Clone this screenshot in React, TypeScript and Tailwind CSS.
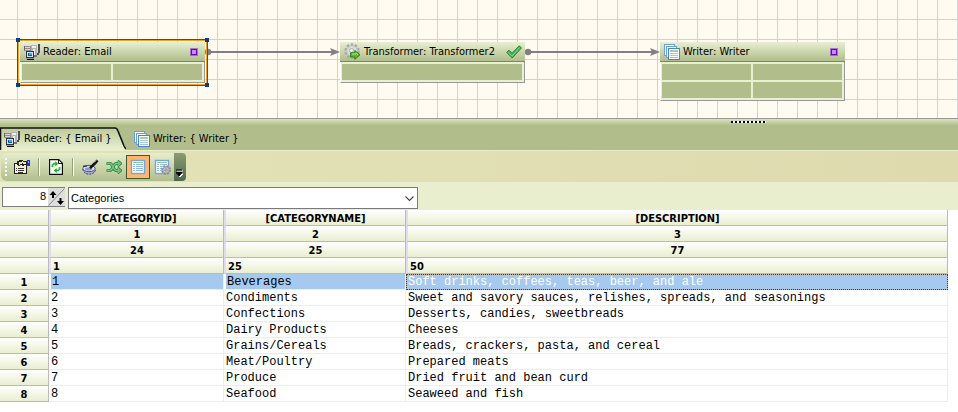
import { useState, type ReactNode } from "react";

const uiFont = "font-['DejaVu_Sans_Condensed','DejaVu_Sans',sans-serif]";

function ReaderIcon() {
  return (
    <svg width="16" height="16" viewBox="0 0 16 16" shapeRendering="crispEdges" aria-hidden="true">
      <path d="M0 2h7v9H5V7H0z" fill="#8f8f8f" />
      <path d="M1 3h5v1H1zM1 5h5v1H1z" fill="#d6d6d6" />
      <path d="M0 2h1v4H0zM2 7h1v2H2z" fill="#666" />
      <path d="M7 1h6v11H7z" fill="#b4b4b4" />
      <path d="M8 2h4v2H8zM9 5h2v6H9z" fill="#efefef" />
      <path d="M14 0h2v9h-1v2h-2V9h1z" fill="#4e4e4e" />
      <path d="M13 2h1v6h-1z" fill="#e0e0e0" />
      <path d="M2 7h8v7H2z" fill="#333" />
      <path d="M3 8h6v5H3z" fill="#d9e2ea" />
      <path d="M4 9h4v3H4z" fill="#0759b8" />
      <path d="M5 9h3v2H5z" fill="#22b6ed" />
      <path d="M2 14h8v1H2z" fill="#999" />
      <path d="M3 15h7v1H3z" fill="#111" />
      <path d="M10 11h3v2h-3z" fill="#777" />
    </svg>
  );
}

function WriterIcon() {
  return (
    <svg width="16" height="16" viewBox="0 0 16 16" aria-hidden="true">
      <rect x="0.5" y="0.5" width="10" height="11" fill="#f3f8fd" stroke="#6f9fdb" />
      <rect x="2.5" y="2.5" width="10" height="11" fill="#f3f8fd" stroke="#6f9fdb" />
      <rect x="4.5" y="4.5" width="11" height="11" fill="#f8fbff" stroke="#4f82c8" />
      <path d="M6 6h8v2H6z" fill="#a9d08c" />
      <path d="M6 9h8v1H6zM6 11h8v1H6zM6 13h8v1H6z" fill="#a5c4ec" />
    </svg>
  );
}

function GearArrowIcon() {
  return (
    <svg width="17" height="17" viewBox="0 0 17 17" aria-hidden="true">
      <circle cx="8" cy="8" r="6.4" fill="none" stroke="#a6a6a6" strokeWidth="2.6" strokeDasharray="2.4 1.62" />
      <circle cx="8" cy="8" r="5.4" fill="#dcdcdc" stroke="#bdbdbd" />
      <circle cx="7.5" cy="7.5" r="2" fill="#f4f7e9" stroke="#a8a8a8" />
      <path d="M6.5 9.8h4.3V7.5l5.2 4.3-5.2 4.5V14H6.5z" fill="#62b52c" stroke="#2c8216" />
      <path d="M8 11h4v-1l2 1.8" fill="none" stroke="#b3e283" />
    </svg>
  );
}

function CheckIcon() {
  return (
    <svg width="16" height="14" viewBox="0 0 16 14" aria-hidden="true">
      <path d="M.7 7.4 3 5.2l3 3.1L13.3.8 15.4 3 6.2 13z" fill="#4caf58" stroke="#23853a" strokeLinejoin="round" />
      <path d="m2 7.2 4 4L13.6 2.5" fill="none" stroke="#8bd690" />
    </svg>
  );
}

function PropertiesIcon() {
  return (
    <svg width="18" height="16" viewBox="0 0 18 16" shapeRendering="crispEdges" aria-hidden="true">
      <path d="M1 4h13v11H1z" fill="#222" />
      <path d="M2 5h11v9H2z" fill="#f2efd4" />
      <path d="M3 9h1v1H3zM5 9h6v1H5zM3 11h1v1H3zM5 11h6v1H5zM5 13h5v1H5z" fill="#333" />
      <path d="M4 4V2h2V1h4v1h4v4h-3v1H9V6H7v1H5z" fill="#222" />
      <path d="M6 3h3V2h1v1h3v2h-3V4H9v1H7v1H6z" fill="#efe3b0" />
      <path d="M14 1h3v6h-3z" fill="#1732e8" />
      <path d="M15 2h1v2h-1z" fill="#8fa5ff" />
    </svg>
  );
}

function RefreshIcon() {
  return (
    <svg width="14" height="16" viewBox="0 0 14 16" aria-hidden="true">
      <path d="M.6.6h9.2l3.6 3.6v11.2H.6z" fill="#fff" stroke="#111" strokeWidth="1.2" />
      <path d="M9.5.8v3.7h3.7" fill="none" stroke="#111" />
      <path d="M3.4 8V6.2l1.5-1.5H7M10.6 8v2l-1.5 1.5H7" fill="none" stroke="#12c41c" strokeWidth="1.7" />
      <path d="m6.3 2.2 3 2.5-3 2.5zM7.7 9v5l-3-2.5z" fill="#12b41c" />
    </svg>
  );
}

function PanIcon() {
  return (
    <svg width="17" height="16" viewBox="0 0 17 16" aria-hidden="true">
      <path d="M1 10c0 7 12.5 7 12.5 0" fill="#a9aed8" stroke="#3a3f78" strokeDasharray="2 1" />
      <ellipse cx="7" cy="9.5" rx="6.2" ry="3.2" fill="#d4d8f2" stroke="#4d5188" />
      <ellipse cx="6.5" cy="10" rx="3.6" ry="1.6" fill="#8d94cc" />
      <path d="M8 9.2 13.2 4l2.3-2.6" fill="none" stroke="#111" strokeWidth="2.6" />
      <path d="m12.7 3.4 1.8-2" stroke="#888" />
      <path d="M1 7.2h4" stroke="#111" />
    </svg>
  );
}

function ShuffleIcon() {
  return (
    <svg width="16" height="14" viewBox="0 0 16 14" aria-hidden="true">
      {["#2c8944", "#79c584"].map((color, i) => (
        <path
          key={color}
          d="M.5 3.5H4c2.5 0 3.500 7 6 7h3M.5 10.500H4c2.500 0 3.500-7 6-7h3M11.500 1l3 2.500-3 2.500M11.500 8l3 2.500-3 2.500"
          fill="none"
          stroke={color}
          strokeWidth={i === 0 ? 3 : 1.3}
        />
      ))}
    </svg>
  );
}

function GridIcon({ gear = false }: { gear?: boolean }) {
  return (
    <svg width="17" height="16" viewBox="0 0 17 16" aria-hidden="true">
      <rect x="1.5" y="1.5" width="13" height="13" fill="#fff" stroke="#75a5df" strokeWidth="1.4" />
      <path d="M3 3.5h10" stroke="#9dc68d" />
      <path d="M3 5.5h2M6 5.5h7M3 7.5h2M6 7.5h7M3 9.5h2M6 9.5h7M3 11.5h2M6 11.5h7" stroke="#91b7ea" />
      {gear && (
        <>
          <circle cx="12" cy="11" r="3.900" fill="none" stroke="#888" strokeWidth="2" strokeDasharray="1.8 1.26" />
          <circle cx="12" cy="11" r="3.2" fill="#c9c9c9" stroke="#a0a0a0" />
          <circle cx="12" cy="11" r="1.2" fill="#eef2df" stroke="#888" />
        </>
      )}
    </svg>
  );
}

function Port() {
  return <span className="size-1.5 border border-[#6a00c8] bg-[#c48cf5] outline outline-[#7a10d8]/50" />;
}

type NodeProps = {
  place: string;
  title: string;
  icon: ReactNode;
  status: ReactNode;
  cells: number;
  wide?: boolean;
  selected?: boolean;
};

function DiagramNode({ place, title, icon, status, cells, wide, selected }: NodeProps) {
  return (
    <section className={`absolute top-[42px] w-[185px] ${place}`}>
      {selected && (
        <div className="absolute -inset-x-0.5 -top-0.5 -bottom-0.5 border border-[#f5a020] outline outline-[#f00]">
          <i className="absolute -top-[3px] -left-[3px] size-1 bg-[#003c98]" />
          <i className="absolute -top-[3px] -right-[3px] size-1 bg-[#003c98]" />
          <i className="absolute -bottom-[3px] -left-[3px] size-1 bg-[#003c98]" />
          <i className="absolute -right-[3px] -bottom-[3px] size-1 bg-[#003c98]" />
        </div>
      )}
      <header className="relative flex h-5 items-center border-b border-[#808080] bg-linear-to-b from-[#e9f0d2] to-[#b0bd8b] pr-[8px] pl-1">
        {icon}
        <h2 className="ml-[3px] flex-1 pt-0.5 text-[11px] whitespace-nowrap">{title}</h2>
        {status}
      </header>
      <div
        className={`relative grid gap-0.5 border-r border-b border-l border-r-[#999] border-b-[#999] border-l-white bg-[#e9f0d2] px-px py-0.5 pr-0.5 ${wide ? "grid-cols-1" : "grid-cols-2"}`}
      >
        {Array.from({ length: cells }, (_, i) => (
          <span key={i} className="h-4 bg-[#b1be8c]" />
        ))}
      </div>
    </section>
  );
}

function Link({ place }: { place: string }) {
  return (
    <svg className={`absolute top-[47px] ${place}`} width="136" height="10" viewBox="0 0 136 10" aria-hidden="true">
      <path d="M4 5h126" stroke="#808080" strokeWidth="2" />
      <circle cx="4" cy="5" r="3.2" fill="#808080" />
      <path d="m126 1 10 4-10 4 2-4z" fill="#808080" />
    </svg>
  );
}

function ToolButton({ label, active, children }: { label: string; active?: boolean; children: ReactNode }) {
  return (
    <button
      type="button"
      aria-label={label}
      aria-pressed={active}
      className={`flex h-6 w-6 items-center justify-center ${active ? "border border-[#3f5b30] bg-linear-to-b from-[#ffb46c] to-[#ffb870]" : ""}`}
    >
      {children}
    </button>
  );
}

const Separator = () => <span className="h-[18px] w-0.5 border-l border-[#96a37a] bg-white" />;

const columns = [
  { name: "[CATEGORYID]", index: 1, width: 24, start: 1 },
  { name: "[CATEGORYNAME]", index: 2, width: 25, start: 25 },
  { name: "[DESCRIPTION]", index: 3, width: 77, start: 50 },
];

const rows = [
  ["Beverages", "Soft drinks, coffees, teas, beer, and ale"],
  ["Condiments", "Sweet and savory sauces, relishes, spreads, and seasonings"],
  ["Confections", "Desserts, candies, sweetbreads"],
  ["Dairy Products", "Cheeses"],
  ["Grains/Cereals", "Breads, crackers, pasta, and cereal"],
  ["Meat/Poultry", "Prepared meats"],
  ["Produce", "Dried fruit and bean curd"],
  ["Seafood", "Seaweed and fish"],
];

const headCell =
  "h-4 border-r border-b border-[#bbb] bg-linear-to-b from-white to-[#e9eecf] px-0 pt-0.5 pb-0 text-[11px] leading-[13px] font-bold";
const columnHead = `${headCell} border-l-2 border-l-[#dfdcf4]`;
const bodyCell = "h-4 border-r border-b border-[#ededed] pt-0.5 pb-0 pr-0 text-xs leading-[13px] whitespace-nowrap";
const selectedFill = "border-l-2 border-l-white bg-[#a6c9ef] bg-clip-padding pl-px";

function DataTable() {
  return (
    <div className="bg-white pr-2.5 pb-2.5">
      <table className="w-full table-fixed border-separate border-spacing-0">
        <colgroup>
          <col className="w-[49px]" />
          <col className="w-[175px]" />
          <col className="w-[182px]" />
          <col />
        </colgroup>
        <thead>
          <tr>
            <td className={headCell} />
            {columns.map((c) => (
              <th key={c.name} scope="col" className={columnHead}>{c.name}</th>
            ))}
          </tr>
          <tr>
            <td className={headCell} />
            {columns.map((c) => (
              <td key={c.name} className={`${columnHead} text-center`}>{c.index}</td>
            ))}
          </tr>
          <tr>
            <td className={headCell} />
            {columns.map((c) => (
              <td key={c.name} className={`${columnHead} text-center`}>{c.width}</td>
            ))}
          </tr>
          <tr>
            <td className={headCell} />
            {columns.map((c) => (
              <td key={c.name} className={columnHead}>
                <span className="pl-0.5">{c.start}</span>
              </td>
            ))}
          </tr>
        </thead>
        <tbody className="font-['Liberation_Mono',monospace]">
          {rows.map(([name, description], i) => (
            <tr key={name}>
              <th scope="row" className={`${headCell} ${uiFont}`}>{i + 1}</th>
              <td className={`${bodyCell} ${i === 0 ? selectedFill : "pl-0.5"}`}>{i + 1}</td>
              <td className={`${bodyCell} ${i === 0 ? selectedFill : "pl-0.5"}`}>{name}</td>
              <td
                className={
                  i === 0
                    ? "h-4 border border-dotted border-black bg-[#a6c9ef] pt-px pr-0 pb-0 pl-px text-xs leading-[13px] whitespace-nowrap text-white outline -outline-offset-1 outline-[#e08a38]/40"
                    : `${bodyCell} pl-0.5`
                }
              >
                {description}
              </td>
            </tr>
          ))}
        </tbody>
      </table>
    </div>
  );
}

export default function App() {
  const [row, setRow] = useState(8);
  return (
    <main className={`flex min-h-screen flex-col bg-white text-black ${uiFont}`}>
      <div className="relative h-[118px] overflow-hidden bg-[#fffbf0] bg-[linear-gradient(to_right,#d2d2d2_1px,transparent_1px),linear-gradient(to_bottom,#d2d2d2_1px,transparent_1px)] bg-size-[20px_20px] bg-position-[17px_19px]">
        <Link place="left-[204px]" />
        <Link place="left-[524px]" />
        <DiagramNode place="left-5" title="Reader: Email" icon={<ReaderIcon />} status={<Port />} cells={2} selected />
        <DiagramNode
          place="left-[340px]"
          title="Transformer: Transformer2"
          icon={<GearArrowIcon />}
          status={<span className="-mr-[5px]"><CheckIcon /></span>}
          cells={1}
          wide
        />
        <DiagramNode place="left-[660px]" title="Writer: Writer" icon={<WriterIcon />} status={<Port />} cells={4} />
      </div>

      <div className="relative flex h-8 items-end border-t border-[#999] bg-linear-to-b from-[#dbe4bd] via-[#b1be8c] via-20% to-[#b1be8c]">
        <span className="absolute top-[2px] left-[731px] h-[2px] w-[35px] bg-[repeating-linear-gradient(to_right,#000_0_2px,#fff_2px_4px)]" />
        <nav className="flex text-[11px]" role="tablist">
          <button type="button" role="tab" aria-selected="true" className="relative flex h-[23px] w-[126px] items-center pl-1">
            <svg className="absolute inset-0" width="126" height="23" viewBox="0 0 126 23" aria-hidden="true">
              <defs>
                <linearGradient id="tab" x2="0" y2="1">
                  <stop stopColor="#bdca9a" />
                  <stop offset="1" stopColor="#e9f0d2" />
                </linearGradient>
              </defs>
              <path d="M0 1h115q2 0 3 3l6 15q1 3 2 4H0z" fill="url(#tab)" />
              <path d="M.5 23V1H115q2 0 3 3l6 15q1 2 2 3" fill="none" stroke="#111" strokeWidth="1.6" />
            </svg>
            <span className="relative flex items-center gap-1">
              <ReaderIcon />
              <span className="pt-0.5">{"Reader: { Email }"}</span>
            </span>
          </button>
          <button type="button" role="tab" aria-selected="false" className="flex h-[23px] items-center gap-[3px] pl-2">
            <WriterIcon />
            <span className="pt-0.5">{"Writer: { Writer }"}</span>
          </button>
        </nav>
      </div>

      <div className="bg-[#e9eecf]">
        <div className="mt-px flex h-[31px] items-center bg-linear-to-r from-[#e3e3b8] to-[#dedaae]">
          <div role="toolbar" aria-label="Data tools" className="ml-px flex h-7 items-center rounded-md bg-linear-to-b from-[#e6edcc] to-[#b1be8c]">
            <span className="mr-[3px] ml-1 h-[18px] w-[2px] bg-[repeating-linear-gradient(to_bottom,#fff_0_2px,transparent_2px_4px)]" />
            <ToolButton label="Properties"><PropertiesIcon /></ToolButton>
            <span className="ml-1 flex"><Separator /></span>
            <span className="mx-1 flex"><ToolButton label="Refresh"><RefreshIcon /></ToolButton></span>
            <Separator />
            <span className="ml-1 flex"><ToolButton label="Clean"><PanIcon /></ToolButton></span>
            <ToolButton label="Shuffle"><ShuffleIcon /></ToolButton>
            <ToolButton label="Table view" active><GridIcon /></ToolButton>
            <ToolButton label="Table settings"><GridIcon gear /></ToolButton>
            <button type="button" aria-label="More tools" className="flex h-7 w-3 items-end justify-center rounded-r-sm bg-linear-to-b from-[#8a9d70] to-[#52694f] pb-1">
              <svg width="8" height="8" viewBox="0 0 8 8" aria-hidden="true">
                <path d="M1 2h6M1 5h6L4 8z" fill="#fff" stroke="#fff" />
                <path d="M0 1h6M0 3.5h6L3 7z" fill="#000" stroke="#000" strokeWidth="1" />
              </svg>
            </button>
          </div>
        </div>
        <div className="flex h-7 items-start gap-[3px] pt-[5px] pl-0.5 font-['Liberation_Sans',sans-serif] text-[11px]">
          <div className="flex h-5 w-[63px] border border-[#808080] bg-white">
            <input
              aria-label="Row"
              type="text"
              value={row}
              onChange={(e) => setRow(Number(e.target.value) || 0)}
              className="h-4 w-[45px] pr-0.5 text-right outline-none"
            />
            <button type="button" aria-label="Change row" className="size-[18px] bg-[#dedede]" onClick={() => setRow(row + 1)}>
              <svg width="17" height="18" viewBox="0 0 17 18" aria-hidden="true">
                <path d="M.5 17.5 16.5.5" stroke="#888" />
                <path d="M1.500 7 5 3l3.500 4H6v3H4V7zM9 13l3.500 4 3.500-4h-2.500v-3h-2v3z" fill="#000" />
              </svg>
            </button>
          </div>
          <div className="relative h-[22px] w-[350px]">
            <select aria-label="Table" className="size-full appearance-none border border-[#7a7a7a] bg-white pl-0.5 outline-none">
              <option>Categories</option>
            </select>
            <svg className="pointer-events-none absolute top-[9px] right-1" width="9" height="6" viewBox="0 0 9 6" aria-hidden="true">
              <path d="m.5.5 4 4 4-4" fill="none" stroke="#444" strokeWidth="1.1" />
            </svg>
          </div>
        </div>
      </div>
      <DataTable />
    </main>
  );
}
